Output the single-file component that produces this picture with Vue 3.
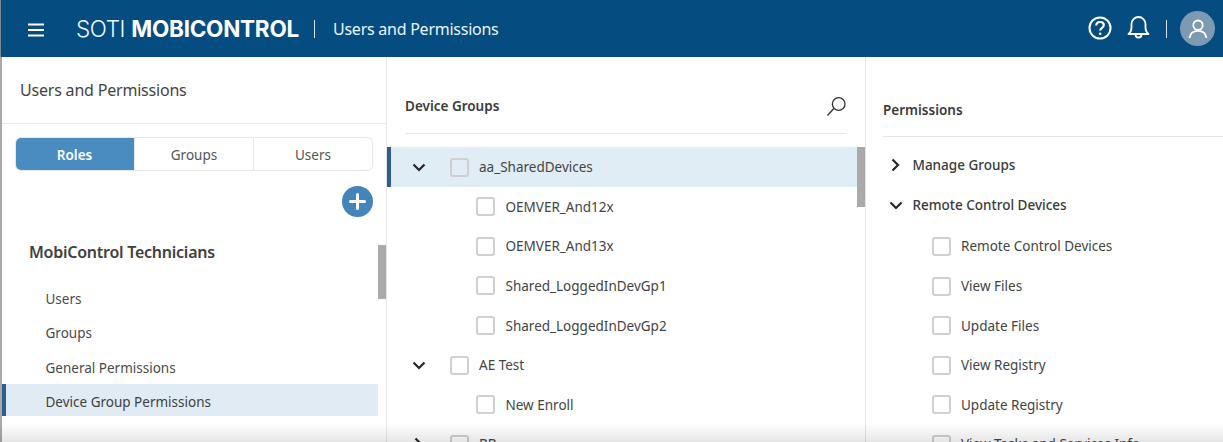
<script setup>
const tabs = ['Roles', 'Groups', 'Users']
const roleItems = ['Users', 'Groups', 'General Permissions', 'Device Group Permissions']
const deviceRows = [
  { label: 'aa_SharedDevices', level: 0, chevron: 'down', selected: true },
  { label: 'OEMVER_And12x', level: 1 },
  { label: 'OEMVER_And13x', level: 1 },
  { label: 'Shared_LoggedInDevGp1', level: 1 },
  { label: 'Shared_LoggedInDevGp2', level: 1 },
  { label: 'AE Test', level: 0, chevron: 'down' },
  { label: 'New Enroll', level: 1 },
  { label: 'BB', level: 0, chevron: 'right' }
]
const permissionItems = ['Remote Control Devices', 'View Files', 'Update Files', 'View Registry', 'Update Registry', 'View Tasks and Services Info']
</script>

<template>
  <div class="app">
    <header class="topbar">
      <button class="menu" aria-label="Menu">
        <svg width="18" height="14" viewBox="0 0 18 14"><path d="M1 1.500h16M1 7h16M1 12.500h16" stroke="#fff" stroke-width="2" fill="none"/></svg>
      </button>
      <div class="logo"><span class="logo-light">SOTI</span> <span class="logo-bold">MOBICONTROL</span></div>
      <span class="top-sep"></span>
      <span class="top-title">Users and Permissions</span>
      <div class="top-actions">
        <svg class="help" width="24" height="24" viewBox="0 0 24 24" fill="none" stroke="#fff" stroke-width="2">
          <circle cx="12" cy="12" r="10.500"/>
          <path d="M8.300 9.500c0-2.300 1.700-3.500 3.800-3.500s3.700 1.300 3.700 3.100c0 2.700-3.600 2.800-3.600 5.500" stroke-width="2.200"/>
          <circle cx="12.200" cy="17.800" r="1.300" fill="#fff" stroke="none"/>
        </svg>
        <svg class="bell" width="23" height="23" viewBox="0 0 23 23" fill="none" stroke="#fff" stroke-width="1.800">
          <path d="M1.500 18c2.200-1.600 3-3.400 3-6.500V8a7 7 0 0 1 14 0v3.500c0 3.100.8 4.900 3 6.500z" stroke-linejoin="round"/>
          <path d="M8.500 18.500a3 3 0 0 0 6 0"/>
        </svg>
        <span class="action-sep"></span>
        <div class="avatar">
          <svg width="20" height="20" viewBox="0 0 20 20" fill="none" stroke="#fff" stroke-width="1.800">
            <circle cx="10" cy="6.200" r="4.700"/>
            <path d="M1.500 19c.6-4.500 3.500-7.200 8.500-7.200s7.900 2.700 8.500 7.200"/>
          </svg>
        </div>
      </div>
    </header>

    <main class="content">
      <section class="pane pane-left">
        <h1 class="pane-title">Users and Permissions</h1>
        <div class="tabs">
          <div v-for="(tab, i) in tabs" :key="tab" class="tab" :class="{ active: i === 0 }">{{ tab }}</div>
        </div>
        <div class="add-row">
          <button class="add" aria-label="Add">
            <svg width="17" height="17" viewBox="0 0 17 17"><path d="M8.500 1.500v14M1.500 8.500h14" stroke="#fff" stroke-width="3" stroke-linecap="round"/></svg>
          </button>
        </div>
        <h2 class="role-name">MobiControl Technicians</h2>
        <ul class="role-list">
          <li v-for="(item, i) in roleItems" :key="item" class="role-item" :class="{ active: i === 3 }">{{ item }}</li>
        </ul>
        <div class="thumb thumb-left"></div>
      </section>

      <section class="pane pane-mid">
        <div class="section-head mid-head">
          <span>Device Groups</span>
          <svg width="21" height="21" viewBox="0 0 21 21" fill="none" stroke="#333" stroke-width="1.300">
            <circle cx="12.700" cy="8" r="6.300"/>
            <path d="M7.800 12.500 1.500 19.500"/>
          </svg>
        </div>
        <div class="tree">
          <div v-for="row in deviceRows" :key="row.label" class="tree-row" :class="[`level-${row.level}`, { selected: row.selected }]">
            <span v-if="row.level === 0" class="chev-slot">
              <svg v-if="row.chevron === 'down'" width="14" height="9" viewBox="0 0 14 9"><path d="M1.500 1.500 7 7l5.500-5.500" fill="none" stroke="#262626" stroke-width="2.200"/></svg>
              <svg v-else width="9" height="14" viewBox="0 0 9 14"><path d="M1.500 1.500 7 7l-5.500 5.500" fill="none" stroke="#262626" stroke-width="2.200"/></svg>
            </span>
            <span class="check"></span>
            <span class="row-label">{{ row.label }}</span>
          </div>
        </div>
        <div class="thumb thumb-mid"></div>
      </section>

      <section class="pane pane-right">
        <div class="section-head right-head"><span>Permissions</span></div>
        <div class="perm-group">
          <svg width="9" height="14" viewBox="0 0 9 14"><path d="M1.500 1.500 7 7l-5.500 5.500" fill="none" stroke="#262626" stroke-width="2.200"/></svg>
          <span>Manage Groups</span>
        </div>
        <div class="perm-group open">
          <svg width="14" height="9" viewBox="0 0 14 9"><path d="M1.500 1.500 7 7l5.500-5.500" fill="none" stroke="#262626" stroke-width="2.200"/></svg>
          <span>Remote Control Devices</span>
        </div>
        <div class="perm-list">
          <div v-for="item in permissionItems" :key="item" class="perm-row">
            <span class="check"></span>
            <span class="row-label">{{ item }}</span>
          </div>
        </div>
      </section>
      <div class="bottom-fade"></div>
    </main>
  </div>
</template>

<style>
html, body { margin: 0; background: #fff; overflow: hidden; }
</style>

<style scoped>
.app {
  width: 1223px;
  height: 442px;
  overflow: hidden;
  display: flex;
  flex-direction: column;
  font-family: "Noto Sans", "Open Sans", sans-serif;
  color: #3c3c3c;
  background: #fff;
}
.topbar {
  flex: 0 0 57px;
  background: #054c80;
  border-left: 1px solid #7d8a94;
  box-sizing: border-box;
  display: flex;
  align-items: center;
  color: #fff;
}
.menu {
  width: 18px;
  height: 14px;
  margin-left: 26px;
  padding: 0;
  border: 0;
  background: none;
  display: flex;
  margin-top: 3px;
}
.logo {
  margin-left: 31px;
  font-family: Inter, sans-serif;
  font-size: 22.500px;
  letter-spacing: -0.250px;
  white-space: nowrap;
  color: #eef8ff;
  width: 225px;
}
.logo-light { font-weight: 300; letter-spacing: -0.400px; }
.logo-bold { font-weight: 700; color: #fff; }
.top-sep { width: 1px; height: 18px; background: #d4e3ee; margin-left: 13px; }
.top-title {
  margin-left: 18px;
  padding-top: 1px;
  font-size: 16px;
  letter-spacing: -0.250px;
  color: #eaf4fb;
  white-space: nowrap;
}
.top-actions {
  margin-left: auto;
  margin-right: 8px;
  display: flex;
  align-items: center;
}
.help { display: block; margin-bottom: 1px; }
.bell { margin-left: 15px; margin-bottom: 2px; }
.action-sep { width: 1px; height: 18px; background: #d4e3ee; margin-left: 16px; }
.avatar {
  width: 35px;
  height: 35px;
  margin-left: 13px;
  border-radius: 50%;
  background: #7d9ab2;
  display: flex;
  align-items: center;
  justify-content: center;
}
.content {
  flex: 1;
  min-height: 0;
  display: flex;
  position: relative;
}
.pane {
  position: relative;
  box-sizing: border-box;
  height: 100%;
  overflow: hidden;
}
.pane-left {
  width: 387px;
  border-left: 2px solid #a9a9a9;
  border-right: 1px solid #e6e6e6;
}
.pane-mid {
  width: 479px;
  border-right: 1px solid #e6e6e6;
  padding-top: 34px;
}
.pane-right {
  flex: 1;
  padding-top: 38px;
}
.pane-title {
  margin: 0;
  height: 67px;
  box-sizing: border-box;
  padding: 22px 0 0 18px;
  font-size: 16px;
  line-height: 22px;
  font-weight: 400;
  color: #444;
  border-bottom: 1px solid #ececec;
  letter-spacing: -0.200px;
}
.tabs {
  margin: 13px 13px 0 13px;
  height: 34px;
  box-sizing: border-box;
  display: grid;
  grid-template-columns: 118px 119px 1fr;
  border: 1px solid #e8e8e8;
  border-radius: 6px;
  overflow: hidden;
  font-size: 13.500px;
}
.tab {
  display: flex;
  align-items: center;
  justify-content: center;
  padding-top: 1px;
  color: #555;
  border-left: 1px solid #e8e8e8;
}
.tab:first-child { border-left: 0; }
.tab.active { background: #4a8cbf; color: #fff; font-weight: 600; margin: -1px 0 -1px -1px; }
.add-row {
  display: flex;
  justify-content: flex-end;
  padding: 15px 13px 0 0;
}
.add {
  width: 31px;
  height: 31px;
  border: 0;
  padding: 0;
  border-radius: 50%;
  background: #4384bb;
  display: flex;
  align-items: center;
  justify-content: center;
}
.role-name {
  margin: 24px 0 0 27px;
  font-size: 16px;
  line-height: 22px;
  font-weight: 600;
  color: #3f3f3f;
  letter-spacing: -0.250px;
}
.role-list {
  list-style: none;
  margin: 20px 8px 0 0;
  padding: 0;
  font-size: 13.500px;
}
.role-item {
  height: 32px;
  box-sizing: border-box;
  margin-top: 2px;
  padding-left: 43.500px;
  line-height: 32px;
  color: #4a4a4a;
}
.role-item:nth-child(3) { margin-top: 3px; }
.role-item.active {
  margin-top: 0;
  padding-top: 2px;
  background: #e1ebf4;
  box-shadow: inset 4px 0 0 #2c5e92;
  color: #3f3f3f;
}
.thumb { position: absolute; width: 8px; background: #aaa; }
.thumb-left { right: 0; top: 188px; height: 54px; }
.thumb-mid { right: 0; top: 90px; height: 60px; }
.section-head {
  display: flex;
  align-items: center;
  justify-content: space-between;
  font-size: 13.500px;
  font-weight: 600;
  color: #3a3a3a;
  border-bottom: 1px solid #e6e6e6;
  box-sizing: border-box;
}
.mid-head {
  margin: 0 18px 0 18px;
  height: 43px;
  padding-bottom: 12px;
  margin-right: 18px;
}
.right-head {
  margin-left: 17px;
  height: 42px;
  padding-bottom: 12px;
}
.tree {
  margin-top: 13px;
  margin-right: 8px;
}
.tree-row {
  height: 39.600px;
  display: flex;
  align-items: center;
  font-size: 13.500px;
}
.tree-row.selected { background: #e0edf5; box-shadow: inset 4px 0 0 #2c5e92; height: 40px; }
.level-1 { padding-left: 89px; }
.level-1 .row-label { margin-left: 10.500px; }
.chev-slot {
  width: 63px;
  display: flex;
  justify-content: center;
  box-sizing: border-box;
}
.check {
  width: 19px;
  height: 19px;
  box-sizing: border-box;
  border: 2px solid #d0d0d0;
  border-radius: 3px;
  background: #fff;
  flex: none;
}
.selected .check { background: #e0edf5; }
.row-label {
  margin-left: 10px;
  color: #444;
  white-space: nowrap;
}
.perm-group {
  height: 40px;
  display: flex;
  align-items: center;
  padding-left: 25px;
  font-size: 13.500px;
  font-weight: 500;
  color: #3a3a3a;
  margin-top: 0;
}
.perm-group:nth-of-type(2) { margin-top: 8px; }
.perm-group span { margin-left: 12.500px; }
.perm-group.open { padding-left: 23px; }
.perm-group.open span { margin-left: 9.500px; }
.perm-list { margin-top: 1.700px; }
.perm-row {
  height: 39.600px;
  display: flex;
  align-items: center;
  padding-left: 66px;
  font-size: 13.500px;
}
.bottom-fade {
  position: absolute;
  left: 0;
  right: 0;
  bottom: 0;
  height: 18px;
  background: linear-gradient(to bottom, rgba(0,0,0,0), rgba(0,0,0,0.1));
  pointer-events: none;
}
</style>
